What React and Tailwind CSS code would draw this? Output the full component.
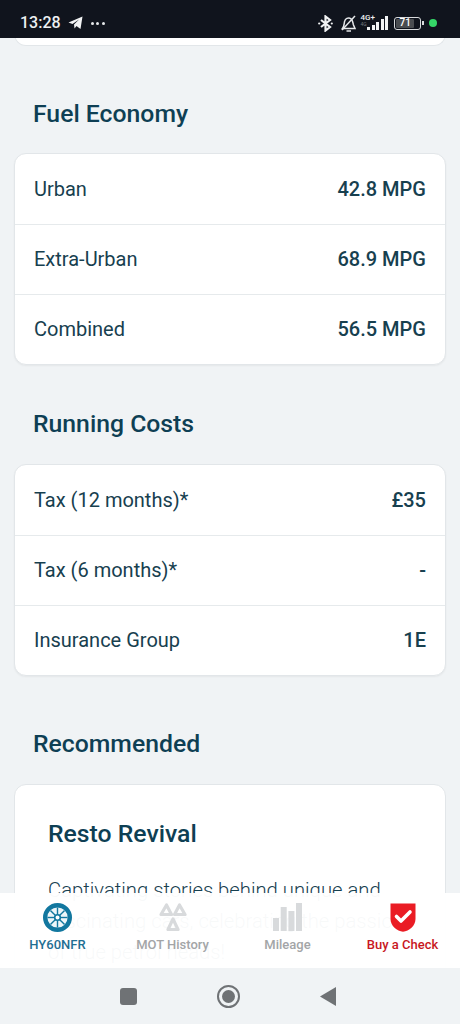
import React from "react";

function Row({ label, value }) {
  return (
    <div className="flex h-[70px] items-center justify-between border-t border-[#e6eaec] px-[19px] pb-[1px] first:border-t-0">
      <span className="text-[20px] text-[#17404f]">{label}</span>
      <span className="text-[20px] font-medium text-[#17404f]">{value}</span>
    </div>
  );
}

function Card({ rows }) {
  return (
    <div className="mx-[14px] rounded-[12px] border border-[#e2e6e9] bg-white shadow-[0_1px_2px_rgba(0,0,0,0.05)]">
      {rows.map((r) => (
        <Row key={r[0]} label={r[0]} value={r[1]} />
      ))}
    </div>
  );
}

function Heading({ children, className }) {
  return <h2 className={`ml-[33px] text-[24.75px] leading-[30px] font-medium text-[#0e3f54] ${className}`}>{children}</h2>;
}

function Wheel() {
  const spokes = [0, 45, 90, 135, 180, 225, 270, 315];
  return (
    <svg width="29" height="29" viewBox="0 0 29 29">
      <circle cx="14.5" cy="14.5" r="12.3" fill="#eef6f9" stroke="#12779f" strokeWidth="4.4" />
      {spokes.map((a) => (
        <line key={a} x1="14.5" y1="12" x2="14.5" y2="4.5" stroke="#12779f" strokeWidth="1.4" transform={`rotate(${a} 14.5 14.5)`} />
      ))}
      <circle cx="14.5" cy="14.5" r="2.8" fill="#fff" stroke="#12779f" strokeWidth="1.6" />
    </svg>
  );
}

function Triangles() {
  return (
    <svg width="28" height="28" viewBox="0 0 28 28" fill="none" stroke="#d8dadc" strokeWidth="3.2" strokeLinejoin="round">
      <path d="M7.5 2 L12.5 11.5 H2 Z" />
      <path d="M20.5 2 L26 11.5 H15.5 Z" />
      <path d="M14 16 L19 26.5 H9 Z" />
    </svg>
  );
}

function Bars() {
  return (
    <svg width="29" height="28" viewBox="0 0 29 28" fill="#d8dadc">
      <rect x="0" y="15" width="6" height="13" />
      <rect x="7.7" y="4" width="6" height="24" />
      <rect x="15.4" y="8" width="6" height="20" />
      <rect x="23" y="0" width="6" height="28" />
    </svg>
  );
}

function Shield() {
  return (
    <svg width="26" height="29" viewBox="0 0 26 29">
      <path d="M0.5 0.5 H25.5 V16 C25.5 23 19 28 13 28.8 C7 28 0.5 23 0.5 16 Z" fill="#ea1c24" />
      <path d="M6.5 13.5 L11 18 L20 9" fill="none" stroke="#fff" strokeWidth="3.6" strokeLinecap="round" strokeLinejoin="round" />
    </svg>
  );
}

function NavItem({ icon, label, color }) {
  return (
    <div className="flex w-[115px] flex-col items-center pt-[9px]">
      <div className="flex h-[30px] items-center justify-center">{icon}</div>
      <span className={`mt-[5px] text-[13px] leading-[16px] font-medium ${color}`}>{label}</span>
    </div>
  );
}

export default function App() {
  return (
    <div className="flex h-[1024px] w-[460px] flex-col overflow-hidden bg-[#f0f3f5] font-['Roboto',sans-serif]">
      <div className="flex h-[38px] shrink-0 items-center justify-between bg-[#10141d] pt-[8px] pr-[23px] pl-[20px] text-[#eef0f2]">
        <div className="flex items-center">
          <span className="text-[16px] font-medium">13:28</span>
          <svg className="ml-[7px]" width="15" height="14" viewBox="0 0 15 14" fill="#f2f3f4">
            <path d="M0.5 6.5 L14.5 0.5 L12.5 13 L8.5 10 L6.5 12.5 L6 8.5 L11 3.5 L4.5 8 Z" />
          </svg>
          <span className="ml-[8px] flex gap-[2.5px]">
            <i className="h-[3px] w-[3px] rounded-full bg-[#e6e8ea]" />
            <i className="h-[3px] w-[3px] rounded-full bg-[#e6e8ea]" />
            <i className="h-[3px] w-[3px] rounded-full bg-[#e6e8ea]" />
          </span>
        </div>
        <div className="flex items-center">
          <svg width="15" height="17" viewBox="0 0 15 17" fill="none" stroke="#f2f3f4" strokeWidth="2.2">
            <path d="M3 5 L12 12 L7.5 15.5 V1.5 L12 5 L3 12" />
            <circle cx="1.2" cy="8.5" r="1.1" fill="#f2f3f4" stroke="none" />
            <circle cx="13.8" cy="8.5" r="1.1" fill="#f2f3f4" stroke="none" />
          </svg>
          <svg className="ml-[7px]" width="17" height="17" viewBox="0 0 17 17" fill="none" stroke="#e6e8ea" strokeWidth="1.5">
            <path d="M2.5 13.5 C4.5 11 4 8 4.7 6 C5.5 3.5 8 2.5 10 3.2 C12.5 4 12.8 7 13.3 9.5 L15 13.5 Z" />
            <path d="M6.5 16 H11" />
            <path d="M2 15 L15 1" />
          </svg>
          <div className="z-10 -mr-[8px] ml-[4px] flex -translate-y-[3px] flex-col items-start leading-none">
            <span className="text-[8px] leading-[9px] font-medium">4G+</span>
            <span className="text-[5px] leading-[5px] text-[#75787d]">4G</span>
          </div>
          <div className="flex items-end gap-[1.5px]">
            <i className="h-[3px] w-[3px] bg-[#f2f3f4]" />
            <i className="h-[5px] w-[3px] bg-[#f2f3f4]" />
            <i className="h-[8px] w-[3px] bg-[#f2f3f4]" />
            <i className="h-[11px] w-[3px] bg-[#f2f3f4]" />
            <i className="h-[14px] w-[3px] bg-[#f2f3f4]" />
          </div>
          <div className="ml-[6px] flex items-center">
            <div className="flex h-[13px] w-[27px] items-center rounded-[3px] border border-[#d8dadc] p-[1px]">
              <div className="flex h-full w-[80%] items-center justify-center rounded-[1px] bg-[#4a4d51] text-[10px] leading-none font-medium text-white">71</div>
            </div>
            <i className="ml-[1px] h-[4px] w-[2px] bg-[#d8dadc]" />
          </div>
          <i className="ml-[5px] h-[8px] w-[8px] rounded-full bg-[#35d768]" />
        </div>
      </div>

      <div className="relative flex-1 overflow-hidden">
        <div className="mx-[14px] -mt-[10px] h-[18px] rounded-b-[12px] border border-t-0 border-[#e2e6e9] bg-white" />
        <Heading className="mt-[53px] mb-[24px]">Fuel Economy</Heading>
        <Card rows={[["Urban", "42.8 MPG"], ["Extra-Urban", "68.9 MPG"], ["Combined", "56.5 MPG"]]} />
        <Heading className="mt-[44px] mb-[25px]">Running Costs</Heading>
        <Card rows={[["Tax (12 months)*", "£35"], ["Tax (6 months)*", "-"], ["Insurance Group", "1E"]]} />
        <Heading className="mt-[53px] mb-[25px]">Recommended</Heading>
        <div className="mx-[14px] h-[300px] rounded-[12px] border border-[#e2e6e9] bg-white px-[33px] pt-[34px] text-[#17404f]">
          <h3 className="text-[24.75px] leading-[30px] font-medium text-[#0e3f54]">Resto Revival</h3>
          <p className="mt-[26px] text-[20.25px] leading-[31px] font-light">
            Captivating stories behind unique and fascinating cars, celebrating the passion of true petrol heads!
          </p>
        </div>
        <div className="absolute inset-x-0 bottom-0 flex h-[75px] bg-white/[.97]">
          <NavItem icon={<Wheel />} label="HY60NFR" color="text-[#1f6f93]" />
          <NavItem icon={<Triangles />} label="MOT History" color="text-[#a3a5a7]" />
          <NavItem icon={<Bars />} label="Mileage" color="text-[#a3a5a7]" />
          <NavItem icon={<Shield />} label="Buy a Check" color="text-[#c8171e]" />
        </div>
      </div>

      <div className="flex h-[56px] shrink-0 items-center bg-[#f0f3f5] pl-[120px]">
        <i className="h-[17px] w-[17px] rounded-[3px] bg-[#6f7275]" />
        <span className="ml-[80px] flex h-[23px] w-[23px] items-center justify-center rounded-full border-[2px] border-[#6f7275]">
          <i className="h-[13px] w-[13px] rounded-full bg-[#6f7275]" />
        </span>
        <svg className="ml-[80px]" width="16" height="19" viewBox="0 0 16 19" fill="#6f7275">
          <path d="M0 9.5 L16 0 V19 Z" />
        </svg>
      </div>
    </div>
  );
}
